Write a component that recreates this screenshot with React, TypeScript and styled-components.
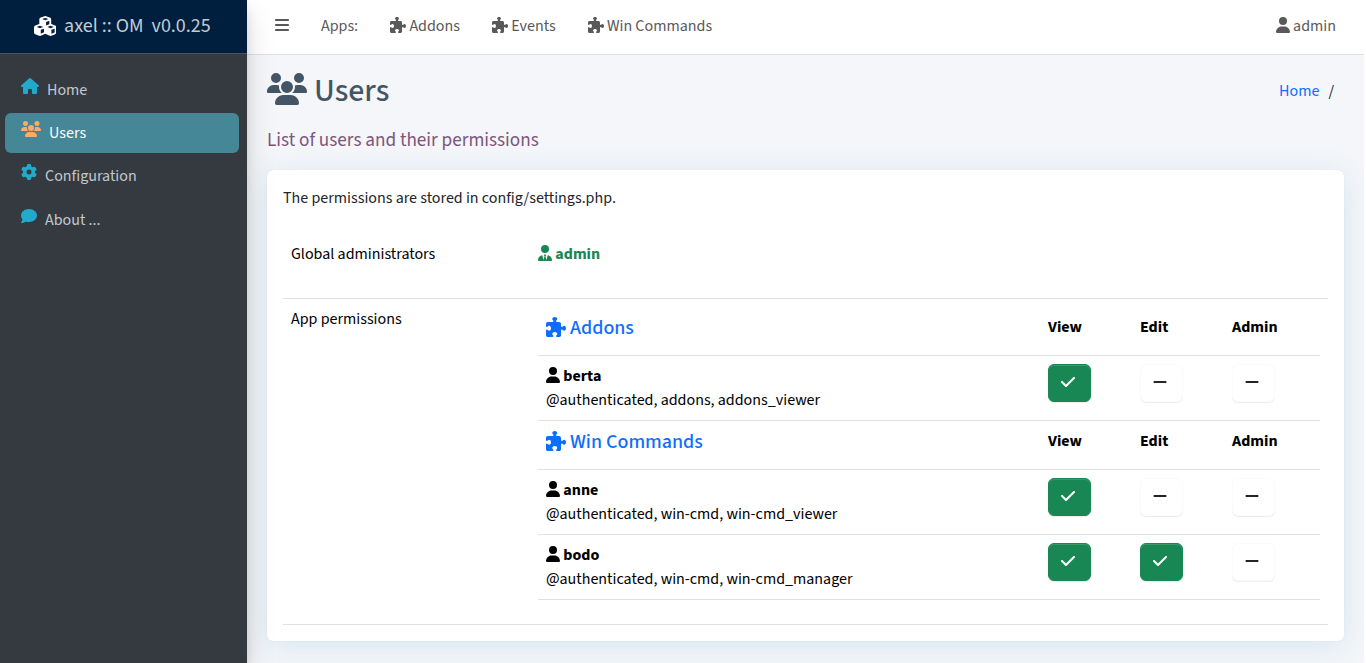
import React from "react";
import styled, { createGlobalStyle } from "styled-components";
import {
  FaBars,
  FaCheck,
  FaComment,
  FaCubes,
  FaGear,
  FaHouse,
  FaMinus,
  FaPuzzlePiece,
  FaUser,
  FaUserTie,
  FaUsers,
} from "react-icons/fa6";

const GlobalStyle = createGlobalStyle`
  *, *::before, *::after { box-sizing: border-box; }
  body {
    margin: 0;
    background: #fff;
    color: #212529;
    font: 400 16px/24px "Source Sans 3", "Noto Sans CJK SC", sans-serif;
  }
  svg { display: block; flex: none; height: 1em; }
  svg[viewBox="0 0 448 512"] { width: 0.875em; }
  svg[viewBox="0 0 576 512"] { width: 1.125em; }
  svg[viewBox="0 0 640 512"] { width: 1.25em; }
  a { color: inherit; text-decoration: none; }
`;

const Page = styled.div`
  display: grid;
  grid-template-columns: 247px 1fr;
  width: 1364px;
  height: 663px;
  overflow: hidden;
  background: #f4f6f9;
`;

const Sidebar = styled.aside`
  position: relative;
  z-index: 1;
  background: #343a40;
  box-shadow: 0 14px 28px rgba(0, 0, 0, 0.14), 0 10px 10px rgba(0, 0, 0, 0.1);
`;

const Brand = styled.a`
  display: flex;
  align-items: center;
  gap: 8px;
  height: 54px;
  padding: 0 0 1px 33.6px;
  background: #001f3f;
  border-bottom: 1px solid #4b545c;
  color: #c2cbd3;
  font-size: 20px;
  white-space: pre;
  svg { color: #fff; }
`;

const Menu = styled.nav`
  display: flex;
  flex-direction: column;
  gap: 3.3px;
  padding: 15.7px 8px 0 5px;
`;

const MenuItem = styled.a<{ $active?: boolean }>`
  display: flex;
  align-items: center;
  gap: 8px;
  height: 40px;
  padding-left: 16px;
  border-radius: 6px;
  color: ${(p) => (p.$active ? "#fff" : "#c2c7d0")};
  background: ${(p) => (p.$active ? "#458797" : "transparent")};
  svg {
    margin-bottom: 8px;
    color: ${(p) => (p.$active ? "#fa6" : "#2ac")};
  }
`;

const Main = styled.div`
  min-width: 0;
`;

const TopBar = styled.header`
  display: flex;
  align-items: center;
  height: 55px;
  padding: 0 28px 2px;
  background: #fff;
  border-bottom: 1px solid #dee2e6;
  color: #595959;
  svg { margin-bottom: 2px; }
`;

const AppLinks = styled.nav`
  display: flex;
  gap: 32px;
  margin: 0 auto 0 32px;
`;

const IconLabel = styled.a`
  display: flex;
  align-items: center;
  gap: 3.3px;
  svg { margin-bottom: 2px; }
`;

const ContentHeader = styled.div`
  display: flex;
  justify-content: space-between;
  padding: 17px 30px 0 20px;
`;

const Title = styled.h1`
  display: flex;
  align-items: center;
  gap: 7px;
  margin: 0;
  color: #456;
  font-size: 32px;
  font-weight: 500;
  line-height: 38px;
  svg { margin-bottom: 4px; }
`;

const Breadcrumb = styled.div`
  display: flex;
  gap: 9px;
  padding-top: 7px;
  a { color: #0d6efd; }
`;

const Subtitle = styled.h2`
  margin: 18px 20px 18px;
  color: #7d557b;
  font-size: 19.2px;
  font-weight: 400;
  line-height: 24px;
`;

const Card = styled.section`
  margin: 0 20px;
  padding: 16px;
  height: 471px;
  border-radius: 6px;
  background: #fff;
  box-shadow: 0 0 1px rgba(0, 0, 0, 0.13), 0 5px 30px rgba(0, 120, 180, 0.13);
`;

const Intro = styled.p`
  margin: 0 0 24px;
`;

const Section = styled.div<{ $height: number }>`
  display: grid;
  grid-template-columns: 231px 1fr;
  gap: 16px;
  height: ${(p) => p.$height}px;
  padding: 8px;
  border-bottom: 1px solid #dee2e6;
  color: #000;
`;

const Administrator = styled(IconLabel)`
  height: 24px;
  color: #198754;
  font-weight: 700;
`;

const PermissionRow = styled.div<{ $head?: boolean }>`
  display: grid;
  grid-template-columns: 502px 92px 92px 80px;
  height: ${(p) => (p.$head ? 49 : 65)}px;
  padding: 8px;
  border-bottom: 1px solid #dee2e6;
  font-weight: ${(p) => (p.$head ? 700 : 400)};
`;

const AppName = styled(IconLabel)`
  height: 26px;
  gap: 4px;
  color: #0d6efd;
  font-size: 20px;
  font-weight: 500;
`;

const UserName = styled(IconLabel)`
  font-weight: 700;
`;

const Toggle = styled.span<{ $on: boolean }>`
  display: flex;
  align-items: center;
  width: 43px;
  height: 38px;
  padding: 0 0 2px 12px;
  border: 1px solid ${(p) => (p.$on ? "#198754" : "#fbfbfc")};
  border-radius: 6px;
  color: ${(p) => (p.$on ? "#fff" : "#212529")};
  background: ${(p) => (p.$on ? "#198754" : "#fff")};
  box-shadow: inset 0 1px 0 rgba(255, 255, 255, 0.15), 0 1px 1px rgba(0, 0, 0, 0.075);
`;

const permissions = [
  {
    app: "Addons",
    users: [{ name: "berta", groups: "@authenticated, addons, addons_viewer", rights: [true, false, false] }],
  },
  {
    app: "Win Commands",
    users: [
      { name: "anne", groups: "@authenticated, win-cmd, win-cmd_viewer", rights: [true, false, false] },
      { name: "bodo", groups: "@authenticated, win-cmd, win-cmd_manager", rights: [true, true, false] },
    ],
  },
];

export default function App() {
  return (
    <>
      <GlobalStyle />
      <Page>
        <Sidebar>
          <Brand href="#">
            <FaCubes />
            <span>{"axel :: OM  v0.0.25"}</span>
          </Brand>
          <Menu>
            <MenuItem href="#"><FaHouse />Home</MenuItem>
            <MenuItem href="#" $active><FaUsers />Users</MenuItem>
            <MenuItem href="#"><FaGear />Configuration</MenuItem>
            <MenuItem href="#"><FaComment />About ...</MenuItem>
          </Menu>
        </Sidebar>
        <Main>
          <TopBar>
            <FaBars />
            <AppLinks>
              <span>Apps:</span>
              {["Addons", "Events", "Win Commands"].map((name) => (
                <IconLabel href="#" key={name}>
                  <FaPuzzlePiece />
                  {name}
                </IconLabel>
              ))}
            </AppLinks>
            <IconLabel href="#"><FaUser />admin</IconLabel>
          </TopBar>
          <ContentHeader>
            <Title><FaUsers />Users</Title>
            <Breadcrumb><a href="#">Home</a><span>/</span></Breadcrumb>
          </ContentHeader>
          <Subtitle>List of users and their permissions</Subtitle>
          <Card>
            <Intro>The permissions are stored in config/settings.php.</Intro>
            <Section $height={65}>
              <span>Global administrators</span>
              <Administrator as="span"><FaUserTie />admin</Administrator>
            </Section>
            <Section $height={326}>
              <span>App permissions</span>
              <div>
                {permissions.map(({ app, users }) => (
                  <React.Fragment key={app}>
                    <PermissionRow $head>
                      <AppName href="#"><FaPuzzlePiece />{app}</AppName>
                      <span>View</span>
                      <span>Edit</span>
                      <span>Admin</span>
                    </PermissionRow>
                    {users.map((user) => (
                      <PermissionRow key={user.name}>
                        <div>
                          <UserName as="div"><FaUser />{user.name}</UserName>
                          <div>{user.groups}</div>
                        </div>
                        {user.rights.map((on, i) => (
                          <Toggle $on={on} key={i}>
                            {on ? <FaCheck /> : <FaMinus />}
                          </Toggle>
                        ))}
                      </PermissionRow>
                    ))}
                  </React.Fragment>
                ))}
              </div>
            </Section>
          </Card>
        </Main>
      </Page>
    </>
  );
}
